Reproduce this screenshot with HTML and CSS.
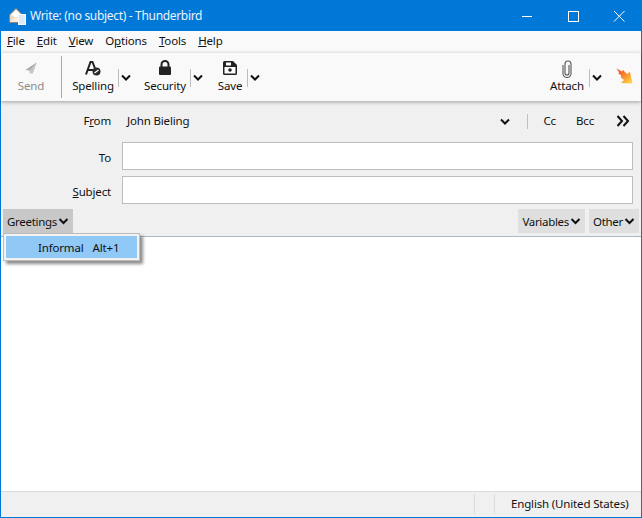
FILE: index.html
```html
<!DOCTYPE html>
<html lang="en">
<head>
<meta charset="utf-8">
<title>Write: (no subject) - Thunderbird</title>
<link rel="stylesheet" href="styles.css">
</head>
<body>
<div class="window">
  <header class="titlebar">
    <svg class="app-icon" width="17" height="18" viewBox="0 0 17 18">
      <path d="M0.500 8 L7 1.500 L13.500 8 V15.500 H0.500 Z" fill="#f0d9bf" stroke="#a07a5e" stroke-width=".8"/>
      <path d="M2 7.500 L7 3 L12 7.500 L7 11 Z" fill="#fff"/>
      <path d="M1 15 L7 10 L13 15 Z" fill="#fbeedd"/>
      <rect x="9.500" y="7.500" width="7" height="10" fill="#dfeaf8" stroke="#f6fbff"/>
    </svg>
    <span class="title">Write: (no subject) - Thunderbird</span>
    <div class="winbtns">
      <svg width="46" height="30" viewBox="0 0 46 30"><path d="M18 15.500H28" stroke="#fff"/></svg>
      <svg width="46" height="30" viewBox="0 0 46 30"><rect x="18.500" y="10.500" width="10" height="10" fill="none" stroke="#fff"/></svg>
      <svg width="46" height="30" viewBox="0 0 46 30"><path d="M18 10L28.500 20.500M28.500 10L18 20.500" stroke="#fff"/></svg>
    </div>
  </header>
  <nav class="menubar">
    <span><u>F</u>ile</span><span><u>E</u>dit</span><span><u>V</u>iew</span><span>O<u>p</u>tions</span><span><u>T</u>ools</span><span><u>H</u>elp</span>
  </nav>
  <div class="toolbar">
    <div class="tool send">
      <svg class="send-icon" width="12" height="12" viewBox="0 0 12 12"><path d="M11.500 0.500 L0.500 8 L4.500 8.500 L7.500 11.500 Z" fill="#a8a8a8"/><path d="M11.500 0.500 L4.500 8.500 L4.500 11.500 L7.500 11.500 Z" fill="#c6c6c6"/></svg>
      <span>Send</span>
    </div>
    <div class="tb-sep"></div>
    <div class="tool spelling">
      <svg width="16" height="16" viewBox="0 0 16 16"><path d="M1 14.500 L5.500 2 H7.500 L10 8.500 M3 10 H8" fill="none" stroke="#222" stroke-width="2"/><circle cx="11.500" cy="11.500" r="4" fill="#2b2b2b"/><path d="M9.500 13 L13.500 10" stroke="#fff" stroke-width="1.200"/></svg>
      <span>Spelling</span>
    </div>
    <div class="split"></div>
    <svg class="chev" width="12" height="8" viewBox="0 0 12 8"><path d="M2 1.500 L6 5.500 L10 1.500" fill="none" stroke="#111" stroke-width="2"/></svg>
    <div class="tool security">
      <svg width="14" height="16" viewBox="0 0 14 16"><path d="M3.500 7 V4.500 a3.500 3.500 0 0 1 7 0 V7" fill="none" stroke="#222" stroke-width="2"/><rect x="1" y="6.500" width="12" height="8.500" rx="1" fill="#222"/></svg>
      <span>Security</span>
    </div>
    <div class="split"></div>
    <svg class="chev" width="12" height="8" viewBox="0 0 12 8"><path d="M2 1.500 L6 5.500 L10 1.500" fill="none" stroke="#111" stroke-width="2"/></svg>
    <div class="tool save">
      <svg width="16" height="16" viewBox="0 0 16 16"><path d="M1 2.500 a1.500 1.500 0 0 1 1.500-1.500 H11 L15 5 V13.500 a1.500 1.500 0 0 1-1.500 1.500 H2.500 a1.500 1.500 0 0 1-1.500-1.500 Z" fill="#222"/><rect x="4" y="2.500" width="5" height="3" fill="#fff"/><rect x="2.500" y="7" width="11" height="6.500" fill="#fff"/><circle cx="8" cy="10" r="1.800" fill="#222"/></svg>
      <span>Save</span>
    </div>
    <div class="split"></div>
    <svg class="chev" width="12" height="8" viewBox="0 0 12 8"><path d="M2 1.500 L6 5.500 L10 1.500" fill="none" stroke="#111" stroke-width="2"/></svg>
    <div class="spacer"></div>
    <div class="tool attach">
      <svg width="12" height="18" viewBox="0 0 12 18"><path d="M8 5 V13 a2 2 0 0 1-4 0 V4 a3 3 0 0 1 6 0 V13.500 a4 4 0 0 1-8 0 V5" fill="none" stroke="#555" stroke-width="1.100"/></svg>
      <span>Attach</span>
    </div>
    <div class="split"></div>
    <svg class="chev" width="12" height="8" viewBox="0 0 12 8"><path d="M2 1.500 L6 5.500 L10 1.500" fill="none" stroke="#111" stroke-width="2"/></svg>
    <svg class="flame" width="17" height="17" viewBox="0 0 17 17">
      <defs><linearGradient id="fl" x1="0" y1="0" x2="1" y2="1"><stop offset="0" stop-color="#ee3a22"/><stop offset=".5" stop-color="#fa8f2c"/><stop offset="1" stop-color="#fde04e"/></linearGradient></defs>
      <path d="M0.500 0.500 L6 3.500 L7 2 L11 6 L14 4 L16.500 15.500 L5 15 L8 12 L5 9.500 L5 7 L2.500 6 L3 4 Z" fill="url(#fl)"/>
    </svg>
  </div>
  <section class="headers">
    <div class="row from-row">
      <label class="field-label">F<u>r</u>om</label>
      <span class="from-name">John Bieling</span>
      <svg class="chev from-chev" width="12" height="8" viewBox="0 0 12 8"><path d="M2 1.500 L6 5.500 L10 1.500" fill="none" stroke="#111" stroke-width="2"/></svg>
      <div class="from-sep"></div>
      <span class="cc">Cc</span>
      <span class="bcc">Bcc</span>
      <svg class="more" width="14" height="12" viewBox="0 0 14 12"><path d="M1.500 1 L6 6 L1.500 11 M7.500 1 L12 6 L7.500 11" fill="none" stroke="#111" stroke-width="2"/></svg>
    </div>
    <div class="row">
      <label class="field-label">To</label>
      <div class="input"></div>
    </div>
    <div class="row">
      <label class="field-label"><u>S</u>ubject</label>
      <div class="input"></div>
    </div>
    <div class="qtbar">
      <div class="qt qt-open">Greetings<svg width="11" height="7" viewBox="0 0 11 7"><path d="M1.500 1 L5.500 5 L9.500 1" fill="none" stroke="#111" stroke-width="2"/></svg></div>
      <div class="spacer"></div>
      <div class="qt">Variables<svg width="11" height="7" viewBox="0 0 11 7"><path d="M1.500 1 L5.500 5 L9.500 1" fill="none" stroke="#111" stroke-width="2"/></svg></div>
      <div class="qt">Other<svg width="11" height="7" viewBox="0 0 11 7"><path d="M1.500 1 L5.500 5 L9.500 1" fill="none" stroke="#111" stroke-width="2"/></svg></div>
    </div>
  </section>
  <main class="editor">
    <div class="popup"><div class="popup-item"><span>Informal</span><span>Alt+1</span></div></div>
  </main>
  <footer class="statusbar">
    <div class="st-cell"></div>
    <div class="st-cell"></div>
    <div class="st-lang">English (United States)</div>
  </footer>
</div>
</body>
</html>
```

FILE: styles.css
```css
* { box-sizing: border-box; }
html, body { margin: 0; height: 100%; }
body { font: 11.500px/16px "Noto Sans", sans-serif; letter-spacing: -0.16px; color: #111; background: #fff; overflow: hidden; }
u { text-underline-offset: 1px; }
svg { display: block; flex: none; }
.window { height: 518px; width: 642px; display: flex; flex-direction: column; border: 1px solid #0078d7; border-top: 0; }
.titlebar { height: 31px; flex: none; background: #0078d7; color: #fff; display: flex; align-items: center; padding-left: 8px; }
.title { margin-left: 4px; font-size: 12px; letter-spacing: -0.32px; color: #eaf3fb; }
.winbtns { margin-left: auto; display: flex; margin-right: -1px; }
.menubar { height: 22px; flex: none; background: #f9f9f9; display: flex; gap: 12px; padding: 2px 0 0 6px; }
.menubar span { line-height: 16px; }
.toolbar { height: 48px; flex: none; background: #f9f9f9; display: flex; align-items: center; padding: 0 8px 0 9px; position: relative; z-index: 1; box-shadow: 0 1px 4px rgba(0,0,0,.35); }
.tool { display: flex; flex-direction: column; align-items: center; height: 34px; justify-content: space-between; }
.send { width: 42px; color: #8c8c8c; margin-right: 9px; }
.send-icon { margin-top: 2px; }
.tb-sep { width: 1px; height: 42px; background: #a8a8a8; margin-right: 10px; }
.split { width: 1px; height: 18px; background: #bdbdbd; margin-left: 4px; margin-top: 2px; }
.chev { margin: 1px 1px 0; }
.spelling { width: 42px; }
.security { width: 42px; margin-left: 11px; }
.save { width: 24px; margin-left: 13px; }
.save + .split { margin-left: 5px; }
.spacer { flex: 1; }
.attach { width: 36px; }
.flame { margin-left: 12px; margin-top: -1px; }
.headers { flex: none; background: #f0f0f0; height: 136px; display: flex; flex-direction: column; border-bottom: 1px solid #a9b9c9; }
.row { display: flex; align-items: center; height: 30px; padding-right: 8px; margin-bottom: 4px; }
.row .field-label { padding-top: 3px; }
.from-row { height: 40px; margin-bottom: 0; }
.from-row .field-label { padding-top: 0; }
.field-label { width: 110px; text-align: right; margin-right: 11px; }
.from-name { margin-left: 5px; }
.from-chev { margin-left: auto; margin-right: 16px; }
.from-sep { width: 1px; height: 15px; background: #c0c0c0; margin-right: 15px; }
.bcc { margin-left: 20px; }
.more { margin-left: 22px; margin-right: 3px; }
.input { flex: 1; height: 28px; background: #fff; border: 1px solid #bdbdbd; }
.qtbar { display: flex; gap: 4px; padding: 4px 2px 0 2px; height: 31px; margin-top: -4px; }
.qt { height: 24px; padding: 1px 4px 0 4px; background: #dfdfdf; display: flex; align-items: center; gap: 1px; white-space: nowrap; letter-spacing: -0.3px; }
.qt-open { background: #c8c8c8; }
.editor { flex: 1; position: relative; background: #fff; }
.popup { position: absolute; left: 2px; top: -4px; width: 137px; padding: 2px; background: #f2f2f2; border: 1px solid #bcbcbc; box-shadow: 3px 3px 3px rgba(0,0,0,.45); }
.popup-item { height: 22px; background: #90c8f6; display: flex; align-items: center; padding: 2px 0 0 32px; gap: 9px; }
.statusbar { height: 26px; flex: none; background: #f0f0f0; border-top: 1px solid #dcdcdc; display: flex; align-items: center; padding-bottom: 2px; }
.st-cell { width: 20px; height: 20px; border-right: 1px solid #dcdcdc; }
.st-cell:first-child { margin-left: auto; }
.st-lang { width: 146px; padding-left: 16px; white-space: nowrap; }
```
